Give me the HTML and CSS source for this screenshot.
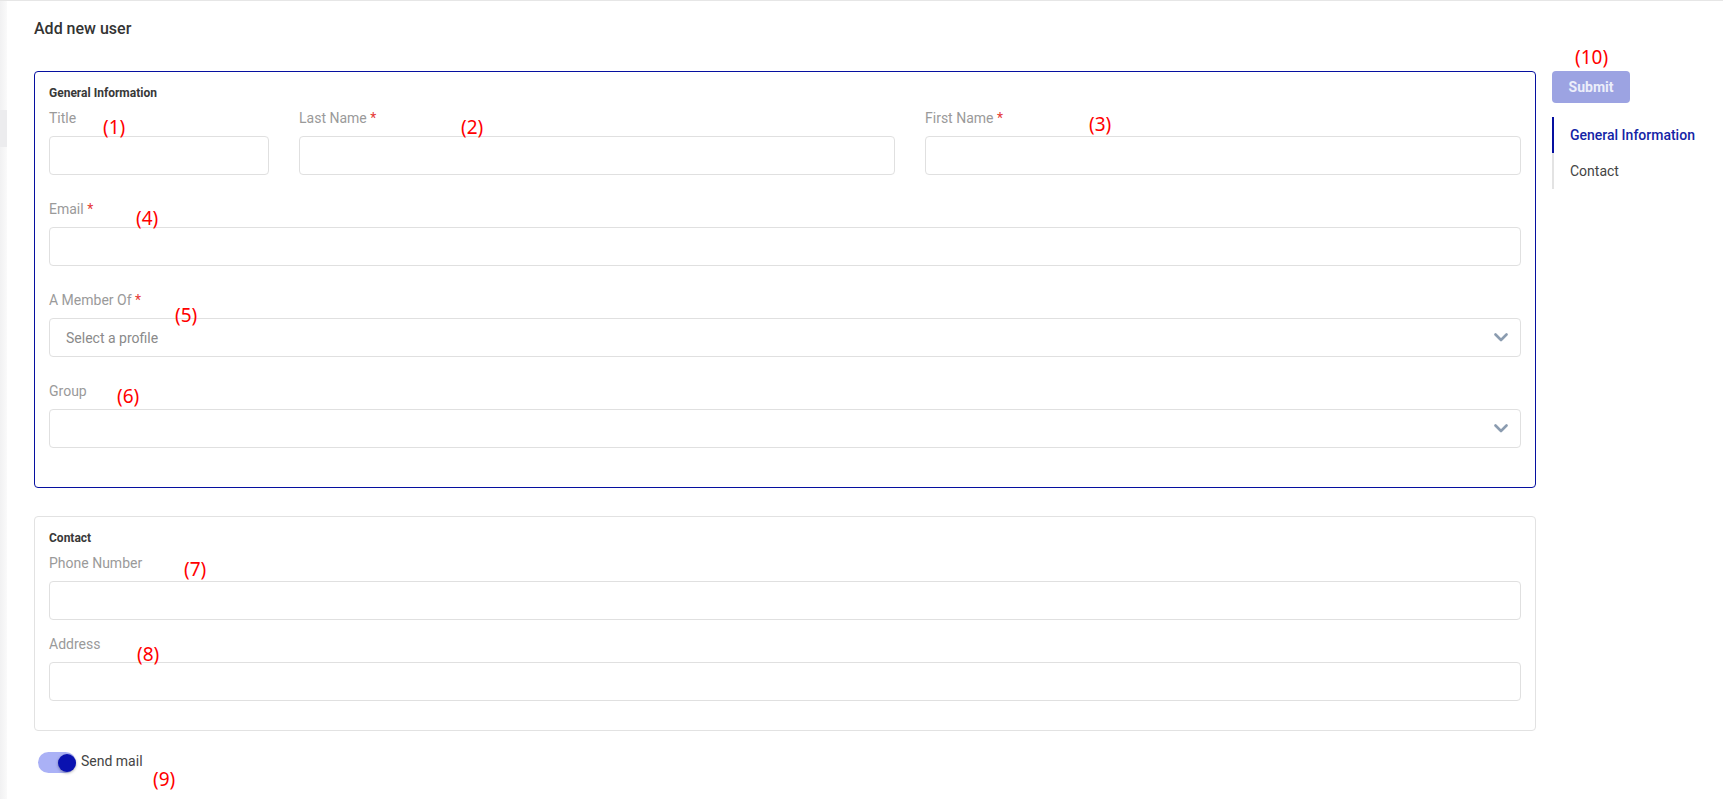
FILE: index.html
```html
<!DOCTYPE html>
<html lang="en">
<head>
  <meta charset="UTF-8">
  <title>Add new user</title>
  <link rel="stylesheet" href="styles.css">
</head>
<body>
  <div class="app">
    <div class="rail"><div class="rail-mark"></div></div>
    <main class="main">
      <h1 class="page-title">Add new user</h1>
      <div class="layout">
        <div class="form-col">
          <section class="card card-active">
            <h2 class="card-title">General Information</h2>
            <div class="name-row">
              <div class="field">
                <label class="label">Title</label>
                <input class="input" type="text">
              </div>
              <div class="field">
                <label class="label">Last Name <span class="req">*</span></label>
                <input class="input" type="text">
              </div>
              <div class="field">
                <label class="label">First Name <span class="req">*</span></label>
                <input class="input" type="text">
              </div>
            </div>
            <div class="field">
              <label class="label">Email <span class="req">*</span></label>
              <input class="input" type="email">
            </div>
            <div class="field">
              <label class="label">A Member Of <span class="req">*</span></label>
              <div class="select">
                <span class="placeholder">Select a profile</span>
                <svg width="14" height="9" viewBox="0 0 14 9" fill="none" stroke="#8b9cb0" stroke-width="2.6" stroke-linecap="round" stroke-linejoin="round">
                  <path d="M1.5 1.5L7 7l5.5-5.5"></path>
                </svg>
              </div>
            </div>
            <div class="field">
              <label class="label">Group</label>
              <div class="select">
                <span class="placeholder"></span>
                <svg width="14" height="9" viewBox="0 0 14 9" fill="none" stroke="#8b9cb0" stroke-width="2.6" stroke-linecap="round" stroke-linejoin="round">
                  <path d="M1.5 1.5L7 7l5.5-5.5"></path>
                </svg>
              </div>
            </div>
          </section>

          <section class="card card-contact">
            <h2 class="card-title">Contact</h2>
            <div class="field">
              <label class="label">Phone Number</label>
              <input class="input" type="text">
            </div>
            <div class="field">
              <label class="label">Address</label>
              <input class="input" type="text">
            </div>
          </section>

          <div class="toggle-row">
            <span class="switch"><span class="knob"></span></span>
            <span class="toggle-text">Send mail</span>
          </div>
        </div>

        <aside class="aside">
          <button class="submit" disabled>Submit</button>
          <nav class="steps">
            <a class="step active">General Information</a>
            <a class="step">Contact</a>
          </nav>
        </aside>
      </div>
    </main>

    <span class="note n1">(1)</span>
    <span class="note n2">(2)</span>
    <span class="note n3">(3)</span>
    <span class="note n4">(4)</span>
    <span class="note n5">(5)</span>
    <span class="note n6">(6)</span>
    <span class="note n7">(7)</span>
    <span class="note n8">(8)</span>
    <span class="note n9">(9)</span>
    <span class="note n10">(10)</span>
  </div>
</body>
</html>
```

FILE: styles.css
```css
body {
  margin: 0;
  font-family: Roboto, "Liberation Sans", sans-serif;
  background: #fff;
  color: #333;
  border-top: 1px solid #e6e6e6;
}
.app {
  position: relative;
  display: flex;
  min-height: 798px;
}
.rail {
  width: 7px;
  flex-shrink: 0;
  background: linear-gradient(to right, #f1f1f2, #fafafa);
}
.rail-mark {
  margin-top: 109px;
  height: 37px;
  background: #ececee;
}
.main {
  flex: 1;
  padding: 18px 0 0 27px;
}
.page-title {
  margin: 0 0 32px;
  font-size: 16px;
  font-weight: 500;
  line-height: 20px;
  color: #333;
}
.layout {
  display: flex;
  gap: 16px;
}
.form-col {
  width: 1502px;
}
.card {
  border: 1px solid #e2e2e2;
  border-radius: 4px;
  padding: 13px 14px 15px;
}
.card-active {
  border-color: #0610a0;
}
.card-contact {
  margin-top: 28px;
}
.card-title {
  margin: 0 0 7px;
  font-size: 12px;
  font-weight: 700;
  line-height: 16px;
  color: #383838;
}
.name-row {
  display: grid;
  grid-template-columns: 220fr 596fr 596fr;
  gap: 30px;
}
.field {
  margin-bottom: 24px;
}
.card-contact .field {
  margin-bottom: 14px;
}
.label {
  display: block;
  font-size: 14px;
  line-height: 20px;
  color: #9a9a9a;
  margin-bottom: 8px;
}
.req {
  color: #e53935;
}
.input {
  display: block;
  width: 100%;
  height: 39px;
  box-sizing: border-box;
  border: 1px solid #e0e0e0;
  border-radius: 4px;
  background: #fff;
  font-family: inherit;
  font-size: 14px;
  padding: 0 16px;
}
.input:focus {
  outline: none;
}
.select {
  display: flex;
  align-items: center;
  justify-content: space-between;
  height: 39px;
  box-sizing: border-box;
  border: 1px solid #e0e0e0;
  border-radius: 4px;
  padding: 0 12px 0 16px;
}
.placeholder {
  font-size: 14px;
  color: #8a8a8a;
}
.toggle-row {
  display: flex;
  align-items: flex-start;
  gap: 5px;
  margin-top: 21px;
  padding-left: 4px;
}
.switch {
  display: flex;
  align-items: center;
  justify-content: flex-end;
  width: 38px;
  height: 21px;
  border-radius: 11px;
  background: #aab1f6;
}
.knob {
  width: 18px;
  height: 18px;
  border-radius: 50%;
  background: #0a12b0;
  box-shadow: 0 1px 3px rgba(0, 0, 30, 0.35);
}
.toggle-text {
  font-size: 14px;
  line-height: 20px;
  color: #444;
  margin-top: -1px;
}
.aside {
  width: 140px;
}
.submit {
  display: block;
  width: 78px;
  height: 32px;
  border: none;
  border-radius: 4px;
  background: #9ca3e2;
  color: #eceefa;
  font-family: inherit;
  font-size: 14px;
  font-weight: 700;
  margin-bottom: 14px;
}
.steps {
  display: flex;
  flex-direction: column;
}
.step {
  display: block;
  height: 36px;
  line-height: 36px;
  padding-left: 16px;
  border-left: 2px solid #e3e3e3;
  font-size: 14px;
  color: #444;
  white-space: nowrap;
}
.step.active {
  border-left-color: #0610a0;
  color: #1424a6;
  font-weight: 500;
}
.note {
  position: absolute;
  font-family: "Noto Sans", "Open Sans", sans-serif;
  font-size: 19px;
  line-height: 22px;
  color: #ff0000;
}
.n1 { left: 103px; top: 115px; }
.n2 { left: 461px; top: 115px; }
.n3 { left: 1089px; top: 112px; }
.n4 { left: 136px; top: 206px; }
.n5 { left: 175px; top: 303px; }
.n6 { left: 117px; top: 384px; }
.n7 { left: 184px; top: 557px; }
.n8 { left: 137px; top: 642px; }
.n9 { left: 153px; top: 767px; }
.n10 { left: 1575px; top: 45px; }
```
